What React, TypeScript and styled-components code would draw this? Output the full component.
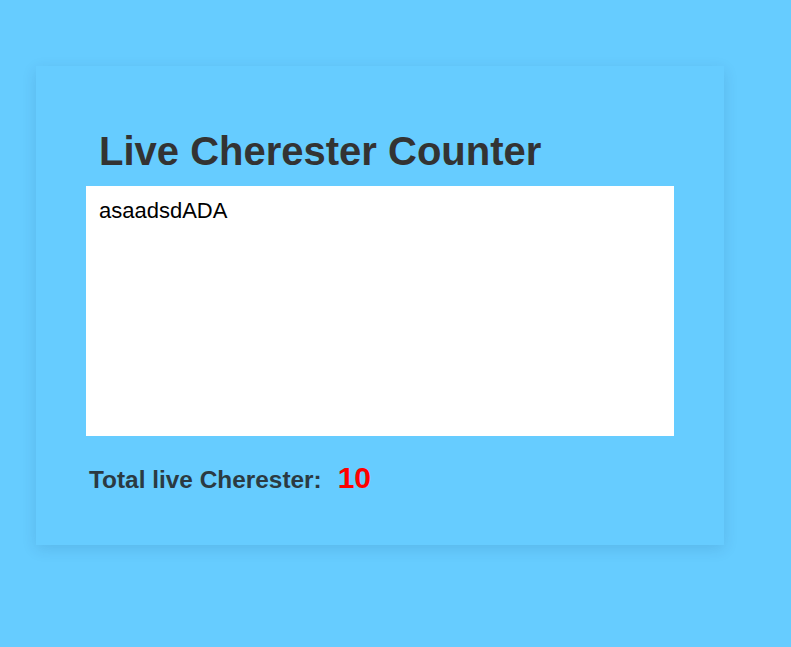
import React, { useState } from "react";
import styled, { createGlobalStyle } from "styled-components";

const GlobalStyle = createGlobalStyle`
  html, body {
    margin: 0;
    padding: 0;
    background: #66ccff;
    font-family: "Liberation Sans", Arial, sans-serif;
  }
  * { box-sizing: border-box; }
`;

const Page = styled.div`
  min-height: 647px;
  padding: 66px 0 0 36px;
`;

const Card = styled.section`
  width: 688px;
  background: #66ccff;
  padding: 50px 50px 50px;
  box-shadow: 0 4px 14px rgba(0, 40, 80, 0.12);
  display: flex;
  flex-direction: column;
`;

const Title = styled.h1`
  margin: 12px 0 12px;
  padding-left: 13px;
  font-size: 40px;
  font-weight: 700;
  line-height: 46px;
  color: #333333;
`;

const TextBox = styled.textarea`
  display: block;
  width: 588px;
  height: 250px;
  border: none;
  outline: none;
  resize: none;
  margin: 0;
  padding: 12px 12px 12px 13px;
  background: #ffffff;
  color: #000000;
  font-family: "Liberation Sans", Arial, sans-serif;
  font-size: 22px;
  line-height: 25px;
`;

const Footer = styled.div`
  display: flex;
  align-items: baseline;
  gap: 16px;
  margin-top: 25px;
  padding-left: 3px;
`;

const Label = styled.span`
  font-size: 24.4px;
  font-weight: 700;
  color: #2b3a42;
`;

const Count = styled.span`
  font-size: 30px;
  font-weight: 700;
  color: #ff0000;
`;

export default function App() {
  const [text, setText] = useState("asaadsdADA");
  return (
    <>
      <GlobalStyle />
      <Page>
        <Card>
          <Title>Live Cherester Counter</Title>
          <TextBox value={text} onChange={(e) => setText(e.target.value)} />
          <Footer>
            <Label>Total live Cherester:</Label>
            <Count>{text.length}</Count>
          </Footer>
        </Card>
      </Page>
    </>
  );
}
